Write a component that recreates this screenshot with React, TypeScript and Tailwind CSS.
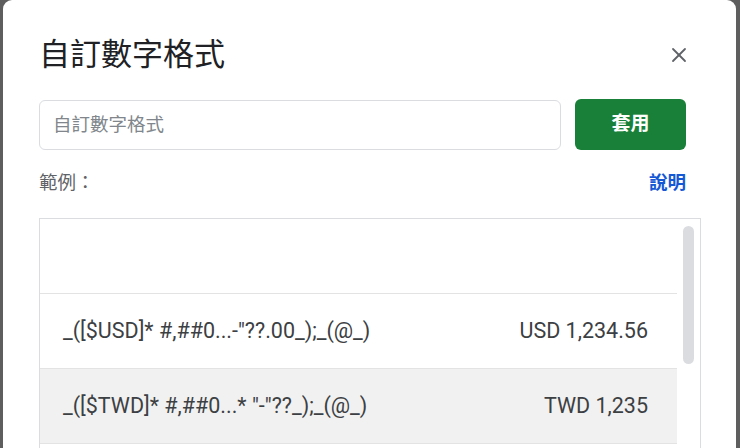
import { X } from "lucide-react";

const rows = [
  { fmt: "", sample: "", active: false },
  { fmt: '_([$USD]* #,##0...-"??.00_);_(@_)', sample: "USD 1,234.56", active: false },
  { fmt: '_([$TWD]* #,##0...* "-"??_);_(@_)', sample: "TWD 1,235", active: true },
  { fmt: "", sample: "", active: false },
];

const cjk = "font-['Roboto','Noto_Sans_CJK_TC',sans-serif]";

export default function App() {
  return (
    <div className="h-[448px] w-[740px] overflow-hidden bg-[#5e5e5e] pl-[3px] pr-[4px]">
      <div className={`h-full rounded-t-[9px] bg-white pl-[36px] pr-[35px] ${cjk}`}>
        {/* header */}
        <div className="box-content flex h-[40px] items-center justify-between pt-[35px]">
          <h1 className="text-[31px] leading-[40px] text-[#202124]">自訂數字格式</h1>
          <button className="mr-[10px] flex h-[24px] w-[24px] items-center justify-center text-[#5f6368]">
            <X size={24} strokeWidth={1.8} />
          </button>
        </div>

        {/* input row */}
        <div className="mt-[24px] flex items-center gap-[14px] pr-[15px]">
          <input
            placeholder="自訂數字格式"
            className="h-[50px] flex-1 rounded-[6px] border border-[#dadce0] px-[13px] text-[18.5px] text-[#202124] outline-none placeholder:text-[#80868b]"
          />
          <button className="h-[51px] w-[111px] rounded-[6px] bg-[#188038] text-[19px] font-bold text-white">
            套用
          </button>
        </div>

        {/* label row */}
        <div className="mt-[20px] flex items-center justify-between pr-[15px]">
          <span className="text-[18.5px] leading-[26px] text-[#5f6368]">範例：</span>
          <a className="text-[18.5px] font-semibold leading-[26px] text-[#1558d6]">說明</a>
        </div>

        {/* list */}
        <div className="mt-[22px] flex h-[300px] border border-[#dadce0]">
          <div className="flex-1">
            {rows.map((r, i) => (
              <div
                key={i}
                className={`flex h-[75px] items-center justify-between border-b border-[#e3e3e3] pl-[23px] pr-[29px] text-[21.5px] text-[#3c4043] ${
                  r.active ? "bg-[#f1f1f1]" : ""
                }`}
              >
                <span>{r.fmt}</span>
                <span>{r.sample}</span>
              </div>
            ))}
          </div>
          <div className="w-[23px] shrink-0 pl-[6px] pr-[6px] pt-[7px]">
            <div className="h-[138px] w-[11px] rounded-full bg-[#dadce0]" />
          </div>
        </div>
      </div>
    </div>
  );
}
